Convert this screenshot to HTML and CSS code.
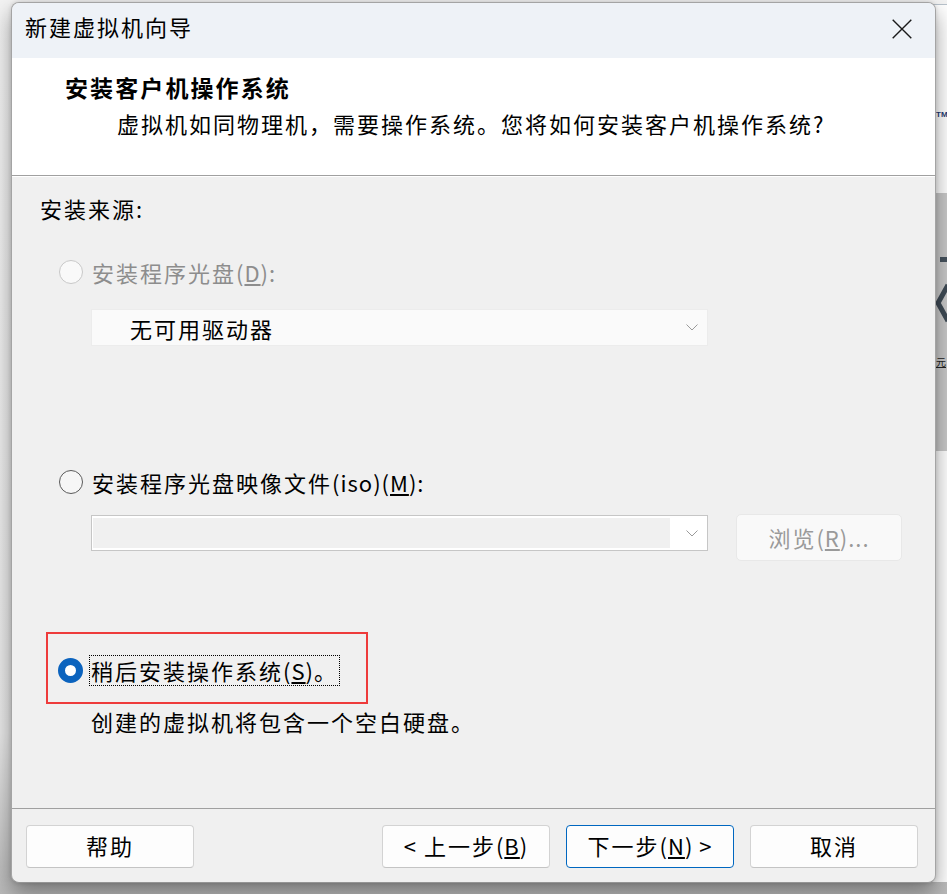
FILE: index.html
```html
<!DOCTYPE html>
<html lang="zh-CN">
<head>
<meta charset="utf-8">
<title>新建虚拟机向导</title>
<link rel="stylesheet" href="styles.css">
</head>
<body>
<div class="desktop">
  <div class="bg-app">
    <span class="bg-tm">TM</span>
    <div class="bg-panel">
      <span class="bg-bar"></span>
      <svg class="bg-chev" width="12" height="40" viewBox="0 0 12 40"><polyline points="12,2 2,20 12,38" fill="none" stroke="#3f4b56" stroke-width="5"/></svg>
      <span class="bg-char">元</span>
    </div>
  </div>

  <div class="dialog">
    <div class="titlebar">
      <span class="title">新建虚拟机向导</span>
      <span class="close" aria-label="关闭">
        <svg width="20" height="20" viewBox="0 0 20 20"><path d="M0.7 0.7 L19.3 19.3 M19.3 0.7 L0.7 19.3" stroke="#1a1a1a" stroke-width="1.4" fill="none"/></svg>
      </span>
    </div>

    <div class="header">
      <div class="heading">安装客户机操作系统</div>
      <div class="subheading">虚拟机如同物理机，需要操作系统。您将如何安装客户机操作系统<span class="lat">?</span></div>
    </div>

    <div class="content">
      <div class="group-label">安装来源<span class="lat">:</span></div>

      <div class="radio-row disabled">
        <span class="radio"></span>
        <span class="radio-text">安装程序光盘<span class="lat">(<u>D</u>):</span></span>
      </div>
      <div class="select select-drive">
        <span class="select-text">无可用驱动器</span>
        <svg class="chev" width="12" height="7" viewBox="0 0 12 7"><polyline points="0.5,0.5 6,6 11.5,0.5" fill="none" stroke="#9a9a9a" stroke-width="1"/></svg>
      </div>

      <div class="radio-row iso-radio">
        <span class="radio"></span>
        <span class="radio-text">安装程序光盘映像文件<span class="lat">(iso)(<u>M</u>):</span></span>
      </div>
      <div class="iso-row">
        <div class="select select-iso">
          <span class="select-field"></span>
          <svg class="chev" width="12" height="7" viewBox="0 0 12 7"><polyline points="0.5,0.5 6,6 11.5,0.5" fill="none" stroke="#9a9a9a" stroke-width="1"/></svg>
        </div>
        <span class="browse">浏览<span class="lat">(<u>R</u>)...</span></span>
      </div>

      <div class="radio-row later-row">
        <span class="radio checked"></span>
        <span class="radio-text focus">稍后安装操作系统<span class="lat">(<u>S</u>)</span>。</span>
        <span class="annot"></span>
      </div>
      <div class="later-desc">创建的虚拟机将包含一个空白硬盘。</div>
    </div>

    <div class="footer">
      <span class="btn help">帮助</span>
      <span class="btn"><span class="lat">&lt;</span>&nbsp;上一步<span class="lat">(<u>B</u>)</span></span>
      <span class="btn primary">下一步<span class="lat">(<u>N</u>) &gt;</span></span>
      <span class="btn">取消</span>
    </div>
  </div>
</div>
</body>
</html>
```

FILE: styles.css
```css
* { box-sizing: border-box; }

html, body {
  margin: 0;
  padding: 0;
}

body {
  font-family: "Noto Sans CJK SC", "Noto Sans", sans-serif;
  font-size: 22px;
  line-height: 30px;
  letter-spacing: 2px;
  color: #000;
  background: #f2f2f2;
}

.lat {
  letter-spacing: 1px;
}

.desktop {
  position: relative;
  width: 947px;
  height: 894px;
  overflow: hidden;
  padding: 2px 0 0 11px;
  background: linear-gradient(#f3f3f3 0%, #e9e9e9 82%, #c4c4c4 96%, #bababa 100%);
}

/* background application peeking out on the right */
.bg-app {
  position: absolute;
  left: 930px;
  top: 4px;
  width: 17px;
  height: 878px;
  background: #ffffff;
  border-top: 1px solid #b9c3cc;
}
.bg-tm {
  position: absolute;
  left: 6px;
  top: 105px;
  font-family: "Liberation Sans", sans-serif;
  font-weight: bold;
  font-size: 8px;
  line-height: 10px;
  letter-spacing: 0;
  color: #1f3b73;
}
.bg-panel {
  position: absolute;
  left: 6px;
  top: 188px;
  width: 11px;
  height: 258px;
  background: #c9c9c9;
}
.bg-bar {
  position: absolute;
  left: 4px;
  top: 64px;
  width: 8px;
  height: 5px;
  background: #46525d;
}
.bg-chev {
  position: absolute;
  left: 0;
  top: 90px;
}
.bg-char {
  position: absolute;
  left: 0;
  top: 162px;
  font-size: 10px;
  line-height: 14px;
  letter-spacing: 0;
  color: #222;
  text-decoration: underline;
}

.dialog {
  position: relative;
  width: 925px;
  height: 881px;
  border: 1px solid #a4a4a4;
  border-bottom-color: #959595;
  border-radius: 8px;
  background: #f0f0f0;
  overflow: hidden;
  display: flex;
  flex-direction: column;
  box-shadow: 0 10px 22px rgba(0, 0, 0, 0.38), 0 0 4px rgba(0, 0, 0, 0.14);
}

.titlebar {
  height: 55px;
  flex: none;
  background: #eef2f7;
  display: flex;
  align-items: flex-start;
  padding: 8px 0 0 13px;
}
.title {
  flex: 1;
}
.close {
  margin: 8px 23px 0 0;
  width: 20px;
  height: 20px;
  display: block;
}
.close svg { display: block; }

.header {
  height: 118px;
  flex: none;
  background: #ffffff;
  border-bottom: 1px solid #a0a0a0;
  padding: 14px 0 0 53px;
}
.heading {
  font-weight: bold;
  font-size: 23px;
  letter-spacing: 2.1px;
}
.subheading {
  margin: 6px 0 0 52px;
}

.content {
  flex: 1;
  border-top: 1px solid #ffffff;
  padding: 16px 0 0 28px;
  display: flex;
  flex-direction: column;
  align-items: flex-start;
}

.group-label {
  height: 30px;
}

.radio-row {
  display: flex;
  align-items: center;
  height: 30px;
  margin-left: 19px;
}
.radio {
  width: 24px;
  height: 24px;
  flex: none;
  border-radius: 50%;
  border: 1.5px solid #5a5a5a;
  background: #f6f6f6;
  margin-right: 9px;
}
.radio-row.disabled {
  margin-top: 34px;
  color: #8d8d8d;
}
.radio-row.disabled .radio {
  border-color: #c8c8c8;
  background: #f9f9f9;
}
.radio.checked {
  border: 7.5px solid #0b63be;
  background: #ffffff;
}

.select {
  display: flex;
  align-items: center;
  width: 617px;
  margin-left: 51px;
}
.select-drive {
  margin-top: 22px;
  height: 37px;
  background: #fafafa;
  border: 1px solid #ececec;
  padding-left: 38px;
}
.select-text {
  flex: 1;
}
.chev {
  flex: none;
  margin-right: 9px;
}

.iso-radio {
  margin-top: 121px;
}

.iso-row {
  display: flex;
  align-items: flex-start;
  margin-top: 17px;
}
.select-iso {
  margin-top: 1px;
  height: 36px;
  background: #ffffff;
  border: 1px solid #c6c6c6;
  padding: 2px 0 2px 1px;
}
.select-field {
  width: 577px;
  height: 30px;
  background: #f0f0f0;
  margin-right: 16px;
}
.browse {
  margin-left: 28px;
  width: 166px;
  height: 47px;
  border: 1px solid #e8e8e8;
  border-radius: 5px;
  background: #f9f9f9;
  color: #9a9a9a;
  display: flex;
  align-items: center;
  justify-content: center;
  padding-bottom: 2px;
}

.later-row {
  position: relative;
  margin-top: 94px;
  height: 31px;
  margin-left: 18px;
}
.later-row .radio {
  width: 25px;
  height: 25px;
  margin-right: 6px;
}
.focus {
  border: 1px dotted #000;
  line-height: 29px;
  height: 31px;
  padding: 0 1px 0 1px;
}
.annot {
  position: absolute;
  left: -12px;
  top: -23px;
  width: 322px;
  height: 72px;
  border: 2px solid #ee3b3b;
}

.later-desc {
  margin: 20px 0 0 51px;
}

.footer {
  flex: none;
  height: 74px;
  border-top: 1px solid #a0a0a0;
  padding: 16px 17px 0 14px;
  display: flex;
  gap: 16px;
}
.btn {
  width: 168px;
  height: 43px;
  border: 1px solid #d3d3d3;
  border-bottom-color: #c4c4c4;
  border-radius: 4px;
  background: #fdfdfd;
  display: flex;
  align-items: center;
  justify-content: center;
  padding-bottom: 4px;
}
.btn.help {
  margin-right: auto;
}
.btn.primary {
  border-color: #0067c0;
}
```
